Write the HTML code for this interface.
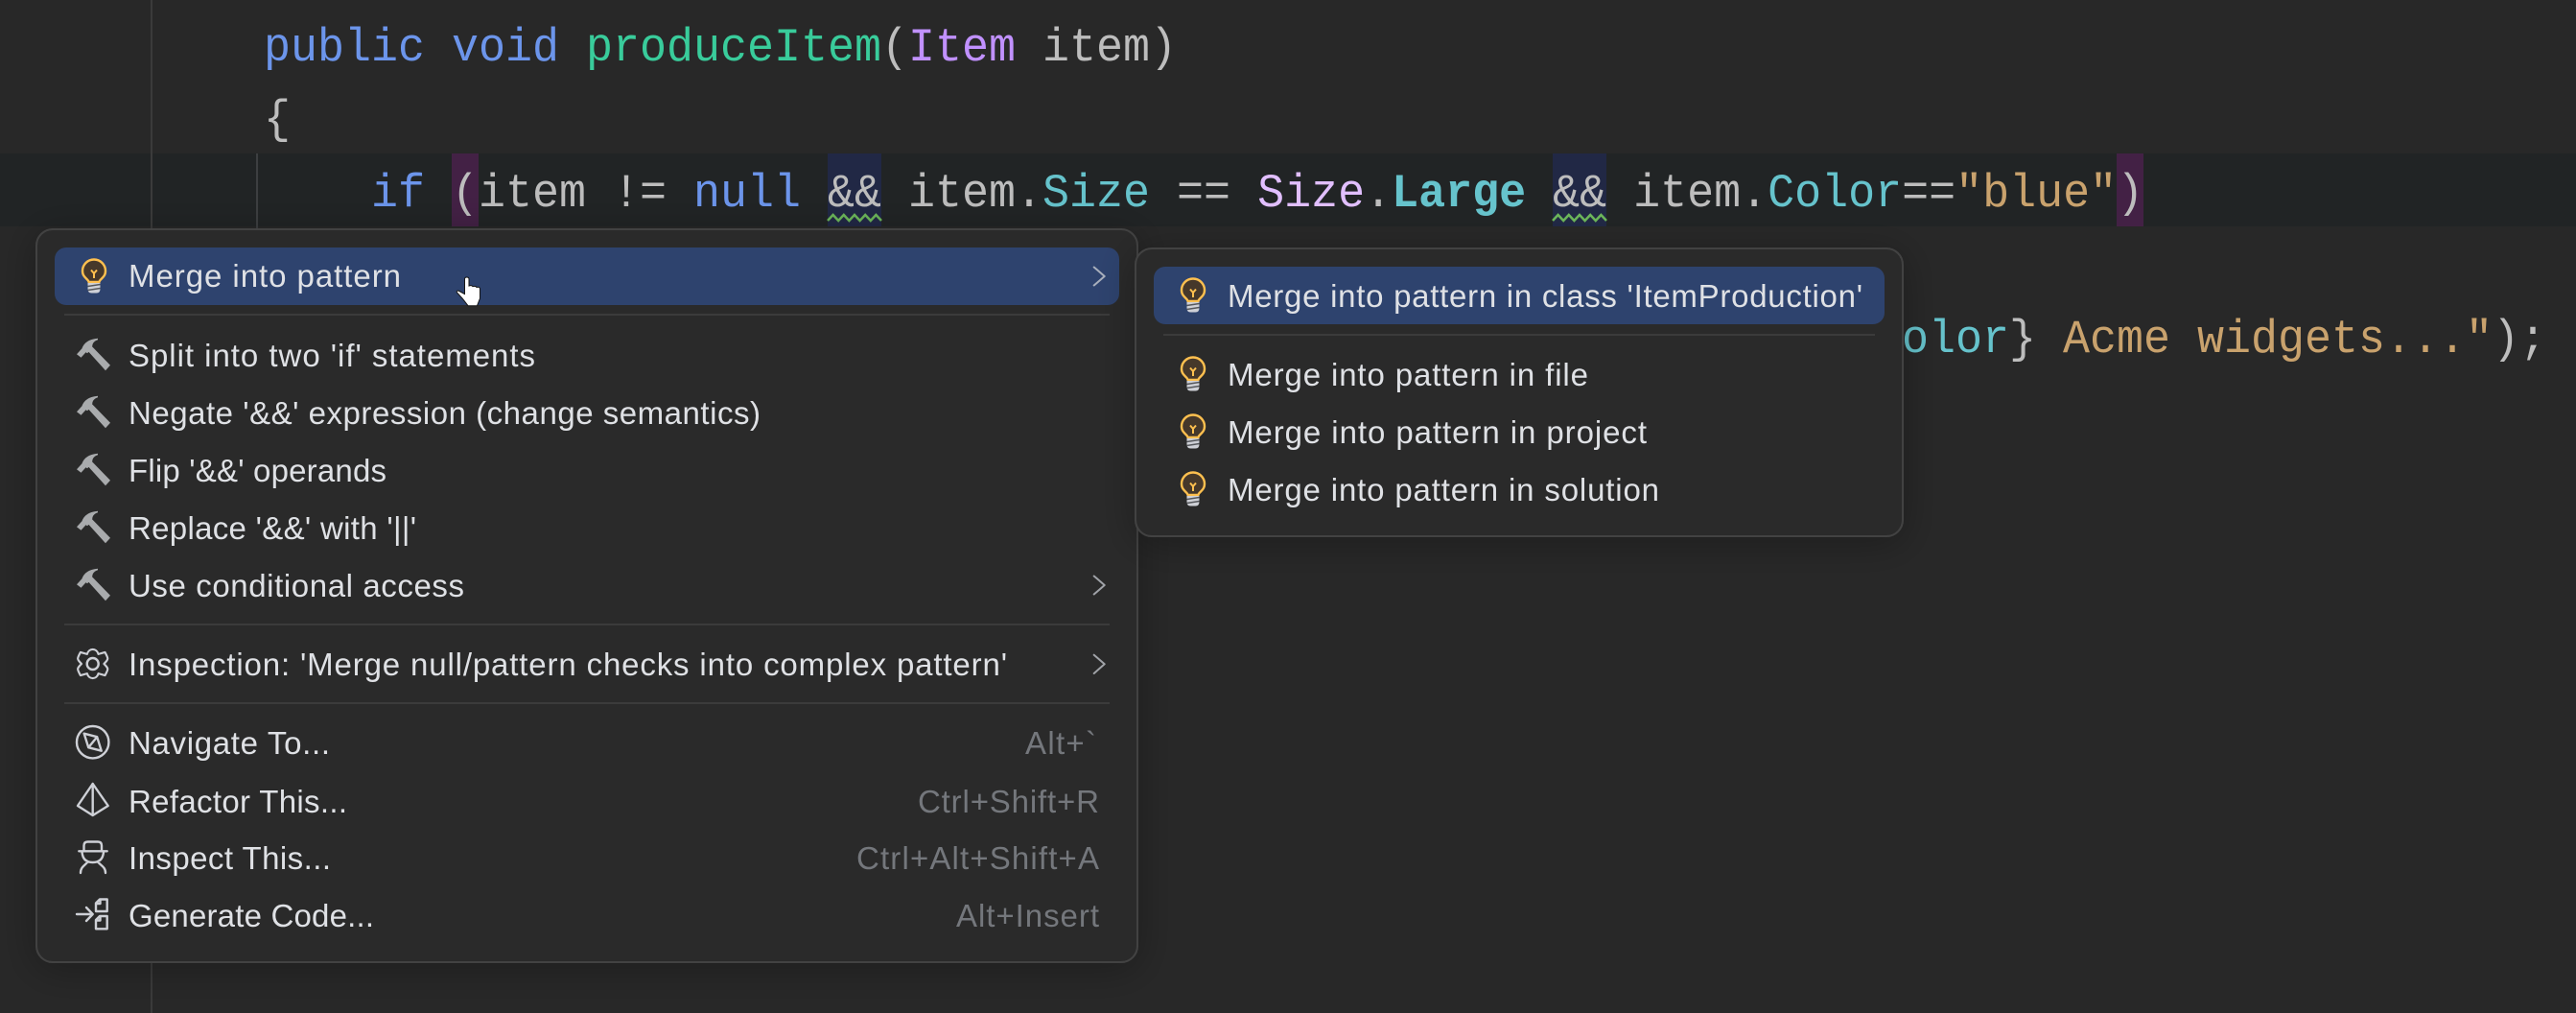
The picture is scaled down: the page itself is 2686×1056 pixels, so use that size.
<!DOCTYPE html>
<html><head><meta charset="utf-8"><style>
html,body{margin:0;padding:0;background:#282828;width:2686px;height:1056px;overflow:hidden}
svg{display:block;position:absolute;left:0;top:0}
.c{font-family:"Liberation Mono",monospace;font-size:46.67px;white-space:pre;fill:#bdbdbd}
.u{font-family:"Liberation Sans",sans-serif;font-size:33px;fill:#dfe1e5}
.s{font-family:"Liberation Sans",sans-serif;font-size:33px;fill:#74777c}
.k{fill:#6c95eb}.m{fill:#39cc9b}.t{fill:#c191ff}.e{fill:#e1bfff}.f{fill:#66c3cc}.q{fill:#c9a26d}
.i{fill:none;stroke:#ced0d6;stroke-width:2.4;stroke-linejoin:round;stroke-linecap:round}
</style></head><body>
<svg width="2686" height="1056" viewBox="0 0 2686 1056" xmlns="http://www.w3.org/2000/svg">
<defs>
<filter id="sh" x="-10%" y="-20%" width="120%" height="140%"><feDropShadow dx="0" dy="6" stdDeviation="20" flood-color="#000" flood-opacity=".28"/></filter>
<g id="bulb">
<path d="M-5.5,11 C-5.5,8 -12,6.5 -12,-0.5 A12,12 0 1 1 12,-0.5 C12,6.5 5.5,8 5.5,11 Z" fill="#46382a" stroke="#ffc04f" stroke-width="2.4" stroke-linejoin="round"/>
<path d="M-3,-1.5 L0,2 L3,-1.5 M0,2 V7" fill="none" stroke="#ffc04f" stroke-width="2"/>
<path d="M-6.5,12 H6.5 V18 Q6.5,22.5 2.5,22.5 H-2.5 Q-6.5,22.5 -6.5,18 Z" fill="#ced0d6"/>
<path d="M-6.5,15.5 L6.5,13.5 M-6.5,19.5 L6.5,17.5" stroke="#56585c" stroke-width="1.4"/>
</g>
<g id="ham" fill="#a9abad">
<path d="M0,16.5 L5.5,10.5 C7.5,5 12,1 22,0 L22,1.5 C17.5,3 15.5,6 16.5,10.5 L11,15.5 L9.5,14.5 L4.5,20 Z"/>
<path d="M11.5,13 L16.5,9 L35,28 L30,33.5 Z"/>
</g>
</defs>

<rect width="2686" height="1056" fill="#282828"/>
<rect y="160" width="2686" height="76" fill="#212425"/>
<rect x="157" width="2" height="1056" fill="#3b3b3b"/>
<rect x="267" y="160" width="2" height="80" fill="#3d3f41"/>

<rect x="471" y="160" width="28" height="76" fill="#432145"/>
<rect x="2207" y="160" width="28" height="76" fill="#432145"/>
<rect x="863" y="160" width="56" height="76" fill="#212845"/>
<rect x="1619" y="160" width="56" height="76" fill="#212845"/>
<path d="M863,230 l5.6,-6 l5.6,6 l5.6,-6 l5.6,6 l5.6,-6 l5.6,6 l5.6,-6 l5.6,6 l5.6,-6 l5.6,6" fill="none" stroke="#6cb65a" stroke-width="2.5"/>
<path d="M1619,230 l5.6,-6 l5.6,6 l5.6,-6 l5.6,6 l5.6,-6 l5.6,6 l5.6,-6 l5.6,6 l5.6,-6 l5.6,6" fill="none" stroke="#6cb65a" stroke-width="2.5"/>

<text class="c" transform="translate(275,63) scale(1,1.06)"><tspan class="k">public</tspan> <tspan class="k">void</tspan> <tspan class="m">produceItem</tspan>(<tspan class="t">Item</tspan> item)</text>
<text class="c" transform="translate(275,138) scale(1,1.06)">{</text>
<text class="c" transform="translate(275,215) scale(1,1.06)">    <tspan class="k">if</tspan> (item != <tspan class="k">null</tspan> &amp;&amp; item.<tspan class="f">Size</tspan> == <tspan class="e">Size</tspan>.<tspan class="f" font-weight="bold">Large</tspan> &amp;&amp; item.<tspan class="f">Color</tspan>==<tspan class="q">"blue"</tspan>)</text>
<text class="c" transform="translate(1983,367) scale(1,1.06)"><tspan class="f">olor</tspan>}<tspan class="q"> Acme widgets..."</tspan>);</text>

<!-- main menu -->
<rect x="38" y="239" width="1148" height="764" rx="17" fill="#2c2c2c" stroke="#434343" stroke-width="2" filter="url(#sh)"/>
<rect x="57" y="258" width="1110" height="60" rx="12" fill="#2e436e"/>
<rect x="67" y="327" width="1090" height="2" fill="#3b3b3b"/>
<rect x="67" y="650" width="1090" height="2" fill="#3b3b3b"/>
<rect x="67" y="732" width="1090" height="2" fill="#3b3b3b"/>

<use href="#bulb" x="98" y="283"/>
<use href="#ham" x="80" y="352.7"/>
<use href="#ham" x="80" y="412.7"/>
<use href="#ham" x="80" y="472.7"/>
<use href="#ham" x="80" y="532.7"/>
<use href="#ham" x="80" y="592.7"/>

<path class="i" transform="translate(96.7,692) scale(.9)" d="M13,0 C18.5,5.6 18.5,5.6 14.2,13.4 L6.5,11.26 C4.5,18.5 -4.5,18.5 -6.5,11.26 L-14.2,13.4 C-18.5,5.6 -18.5,5.6 -13,0 C-18.5,-5.6 -18.5,-5.6 -14.2,-13.4 L-6.5,-11.26 C-4.5,-18.5 4.5,-18.5 6.5,-11.26 L14.2,-13.4 C18.5,-5.6 18.5,-5.6 13,0 Z"/>
<circle class="i" cx="96.7" cy="692" r="6"/>

<circle class="i" cx="96.7" cy="773.7" r="16.7"/>
<path class="i" d="M87.7,764.7 L101.2,768.2 L105.7,782.7 L92.2,779.2 Z M101.2,768.2 L92.2,779.2"/>

<path class="i" d="M96.7,817 L81,840 L96.7,850 L112.7,840 Z M96.7,817 V850"/>

<path class="i" d="M82.3,887.3 H111.7 M87.5,887 V881.5 Q87.5,877.5 91.5,877.5 H102 Q106,877.5 106,881.5 V887 M85.5,888 C86,895 89.5,899 96.7,899 C104,899 107.5,895 108,888 M84,910 C84,904 88,902.5 91,899 M102.5,899 C105.5,902.5 110,904 110,910"/>

<path class="i" d="M80,953 H96.7 M90,946 L96.7,953 L90,960 M104,937.5 H111.7 V950 H100 V941.5 Z M104.5,938 V942 H100 M104,955 H111.7 V968.3 H100 V959 Z M104.5,955.5 V959.5 H100"/>

<path d="M1140.7,278.5 L1151.7,288 L1140.7,297.5" fill="none" stroke="#a9b0bd" stroke-width="2" stroke-linecap="round" stroke-linejoin="round"/>
<path d="M1140.7,600.5 L1151.7,610 L1140.7,619.5" fill="none" stroke="#a0a3a8" stroke-width="2" stroke-linecap="round" stroke-linejoin="round"/>
<path d="M1140.7,682.7 L1151.7,692.3 L1140.7,702" fill="none" stroke="#a0a3a8" stroke-width="2" stroke-linecap="round" stroke-linejoin="round"/>

<text class="u" x="134" y="299" textLength="284">Merge into pattern</text>
<text class="u" x="134" y="382" textLength="424">Split into two 'if' statements</text>
<text class="u" x="134" y="442" textLength="659">Negate '&amp;&amp;' expression (change semantics)</text>
<text class="u" x="134" y="502" textLength="269">Flip '&amp;&amp;' operands</text>
<text class="u" x="134" y="562" textLength="300">Replace '&amp;&amp;' with '||'</text>
<text class="u" x="134" y="622" textLength="350">Use conditional access</text>
<text class="u" x="134" y="704" textLength="916">Inspection: 'Merge null/pattern checks into complex pattern'</text>
<text class="u" x="134" y="786" textLength="210">Navigate To...</text>
<text class="u" x="134" y="847" textLength="228">Refactor This...</text>
<text class="u" x="134" y="906" textLength="211">Inspect This...</text>
<text class="u" x="134" y="966" textLength="256">Generate Code...</text>

<text class="s" x="1069" y="786" textLength="74">Alt+`</text>
<text class="s" x="957" y="847" textLength="189">Ctrl+Shift+R</text>
<text class="s" x="893" y="906" textLength="253">Ctrl+Alt+Shift+A</text>
<text class="s" x="997" y="966" textLength="149">Alt+Insert</text>

<!-- cursor -->
<path d="M484.5,291 Q484.5,289 486.7,289 Q489,289 489,291 V298 Q492,297 493,298.7 Q496,297.7 497,299.5 Q500.5,298.5 500.5,301.5 V311 L497.5,318.7 H488 L482,311 L476.5,305 Q475.5,303 478,303 L484.5,306.5 Z" fill="#fff" stroke="#151515" stroke-width="1"/>

<!-- submenu -->
<rect x="1184" y="259" width="800" height="300" rx="17" fill="#2c2c2c" stroke="#434343" stroke-width="2" filter="url(#sh)"/>
<rect x="1203" y="278" width="762" height="60" rx="12" fill="#2e436e"/>
<rect x="1213" y="348" width="742" height="2" fill="#3b3b3b"/>
<use href="#bulb" x="1244" y="303"/>
<use href="#bulb" x="1244" y="385"/>
<use href="#bulb" x="1244" y="445"/>
<use href="#bulb" x="1244" y="505"/>
<text class="u" x="1280" y="320" textLength="662">Merge into pattern in class 'ItemProduction'</text>
<text class="u" x="1280" y="402" textLength="376">Merge into pattern in file</text>
<text class="u" x="1280" y="462" textLength="437">Merge into pattern in project</text>
<text class="u" x="1280" y="522" textLength="450">Merge into pattern in solution</text>
</svg>
</body></html>
